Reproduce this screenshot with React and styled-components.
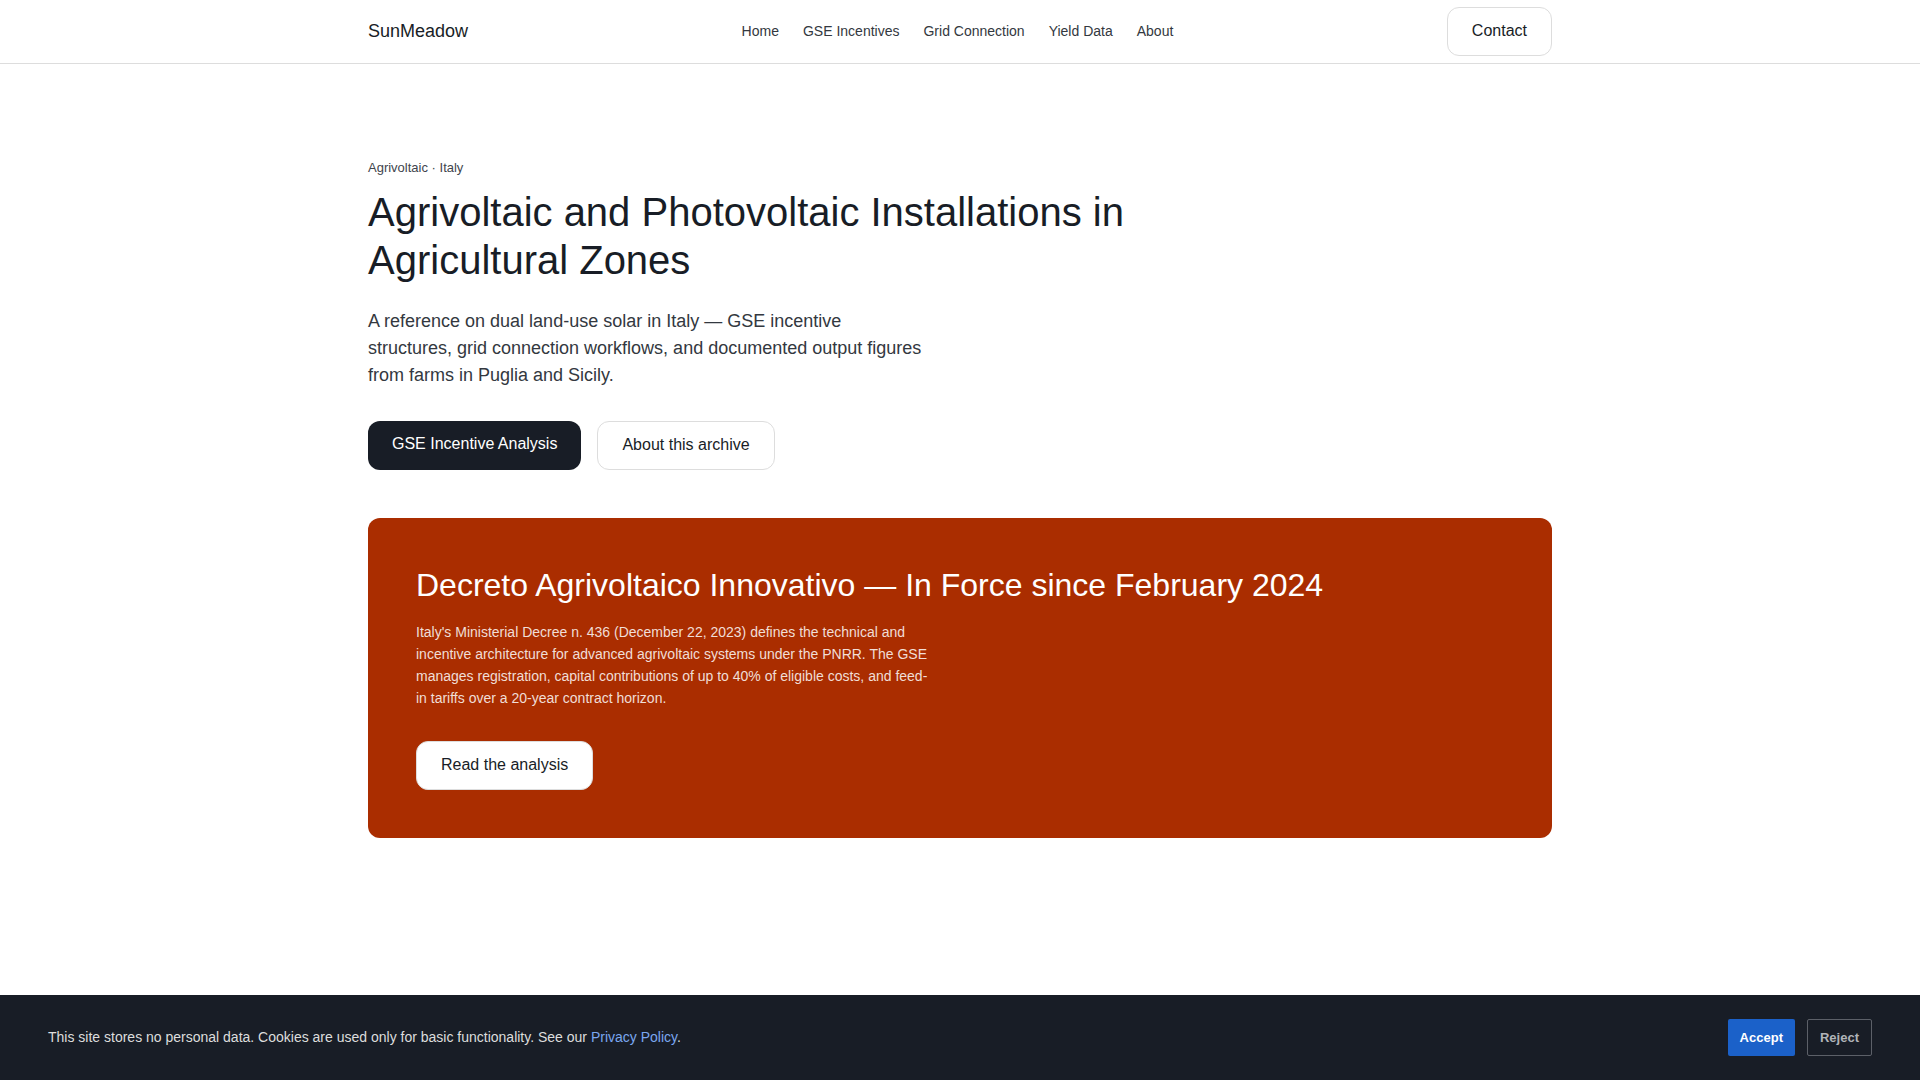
import React from 'react'
import styled, { createGlobalStyle } from 'styled-components'

const GlobalStyle = createGlobalStyle`
  * {
    box-sizing: border-box;
  }

  body {
    margin: 0;
    background: #ffffff;
    color: #181d26;
    font-family: 'Liberation Sans', Arial, sans-serif;
    font-size: 16px;
  }

  h1, h2, p {
    margin: 0;
    font-weight: 400;
  }
`

const Container = styled.div`
  width: 100%;
  max-width: 1280px;
  margin: 0 auto;
  padding: 0 48px;
`

const Header = styled.header`
  background: #ffffff;
  border-bottom: 1px solid #dddddd;
`

const HeaderInner = styled(Container)`
  display: flex;
  align-items: center;
  justify-content: space-between;
  height: 63px;
`

const Brand = styled.a`
  color: #181d26;
  font-size: 18px;
  text-decoration: none;
`

const Nav = styled.nav`
  display: flex;
  gap: 24px;
`

const NavLink = styled.a`
  color: #333840;
  font-size: 14px;
  line-height: 17px;
  text-decoration: none;
`

const ButtonLink = styled.a`
  display: inline-block;
  padding: 12px 24px 13px;
  border: 1px solid #dddddd;
  border-radius: 12px;
  background: #ffffff;
  color: #181d26;
  font-size: 16px;
  line-height: 22px;
  text-decoration: none;
`

const PrimaryLink = styled(ButtonLink)`
  border: none;
  background: #181d26;
  color: #ffffff;
`

const Hero = styled.section`
  padding: 96px 0;
`

const Eyebrow = styled.p`
  margin-bottom: 12px;
  color: #41454d;
  font-size: 13px;
  line-height: 16px;
`

const Title = styled.h1`
  max-width: 800px;
  margin-bottom: 24px;
  font-size: 40px;
  line-height: 48px;
`

const Lead = styled.p`
  max-width: 560px;
  margin-bottom: 32px;
  color: #333840;
  font-size: 18px;
  line-height: 27px;
`

const Actions = styled.div`
  display: flex;
  gap: 16px;
  margin-bottom: 48px;
`

const Card = styled.article`
  display: flex;
  flex-direction: column;
  align-items: flex-start;
  padding: 48px;
  border-radius: 12px;
  background: #aa2d00;
  color: #ffffff;
`

const CardTitle = styled.h2`
  margin-bottom: 16px;
  font-size: 32px;
  line-height: 39px;
`

const CardText = styled.p`
  max-width: 520px;
  margin-bottom: 32px;
  color: rgba(255, 255, 255, 0.85);
  font-size: 14px;
  line-height: 22px;
`

const CookieBar = styled.div`
  position: fixed;
  right: 0;
  bottom: 0;
  left: 0;
  display: flex;
  align-items: center;
  justify-content: space-between;
  gap: 24px;
  padding: 24px 48px;
  background: #181d26;
`

const CookieText = styled.p`
  color: #dddddd;
  font-size: 14px;
  line-height: 21px;

  a {
    color: #7aa7f0;
    text-decoration: none;
  }
`

const CookieActions = styled.div`
  display: flex;
  gap: 12px;
`

const CookieButton = styled.button`
  padding: 10px 12px;
  border: none;
  border-radius: 2px;
  background: #1b61c9;
  color: #ffffff;
  font-family: inherit;
  font-size: 13px;
  font-weight: 700;
  line-height: 15px;
  cursor: pointer;
`

const RejectButton = styled(CookieButton)`
  border: 1px solid #5c6068;
  background: transparent;
  color: #b0b3b8;
`

const links = ['Home', 'GSE Incentives', 'Grid Connection', 'Yield Data', 'About']

const App = () => (
  <>
    <GlobalStyle />
    <Header>
      <HeaderInner>
        <Brand href="#">SunMeadow</Brand>
        <Nav>
          {links.map(link => (
            <NavLink key={link} href="#">{link}</NavLink>
          ))}
        </Nav>
        <ButtonLink href="#">Contact</ButtonLink>
      </HeaderInner>
    </Header>

    <main>
      <Hero>
        <Container>
          <Eyebrow>Agrivoltaic · Italy</Eyebrow>
          <Title>Agrivoltaic and Photovoltaic Installations in Agricultural Zones</Title>
          <Lead>
            A reference on dual land-use solar in Italy — GSE incentive structures, grid
            connection workflows, and documented output figures from farms in Puglia and Sicily.
          </Lead>
          <Actions>
            <PrimaryLink href="#">GSE Incentive Analysis</PrimaryLink>
            <ButtonLink href="#">About this archive</ButtonLink>
          </Actions>
          <Card>
            <CardTitle>Decreto Agrivoltaico Innovativo — In Force since February 2024</CardTitle>
            <CardText>
              Italy's Ministerial Decree n. 436 (December 22, 2023) defines the technical and
              incentive architecture for advanced agrivoltaic systems under the PNRR. The GSE
              manages registration, capital contributions of up to 40% of eligible costs, and
              feed-in tariffs over a 20-year contract horizon.
            </CardText>
            <ButtonLink href="#">Read the analysis</ButtonLink>
          </Card>
        </Container>
      </Hero>
    </main>

    <CookieBar>
      <CookieText>
        This site stores no personal data. Cookies are used only for basic functionality. See
        our <a href="#">Privacy Policy</a>.
      </CookieText>
      <CookieActions>
        <CookieButton type="button">Accept</CookieButton>
        <RejectButton type="button">Reject</RejectButton>
      </CookieActions>
    </CookieBar>
  </>
)

export default App
